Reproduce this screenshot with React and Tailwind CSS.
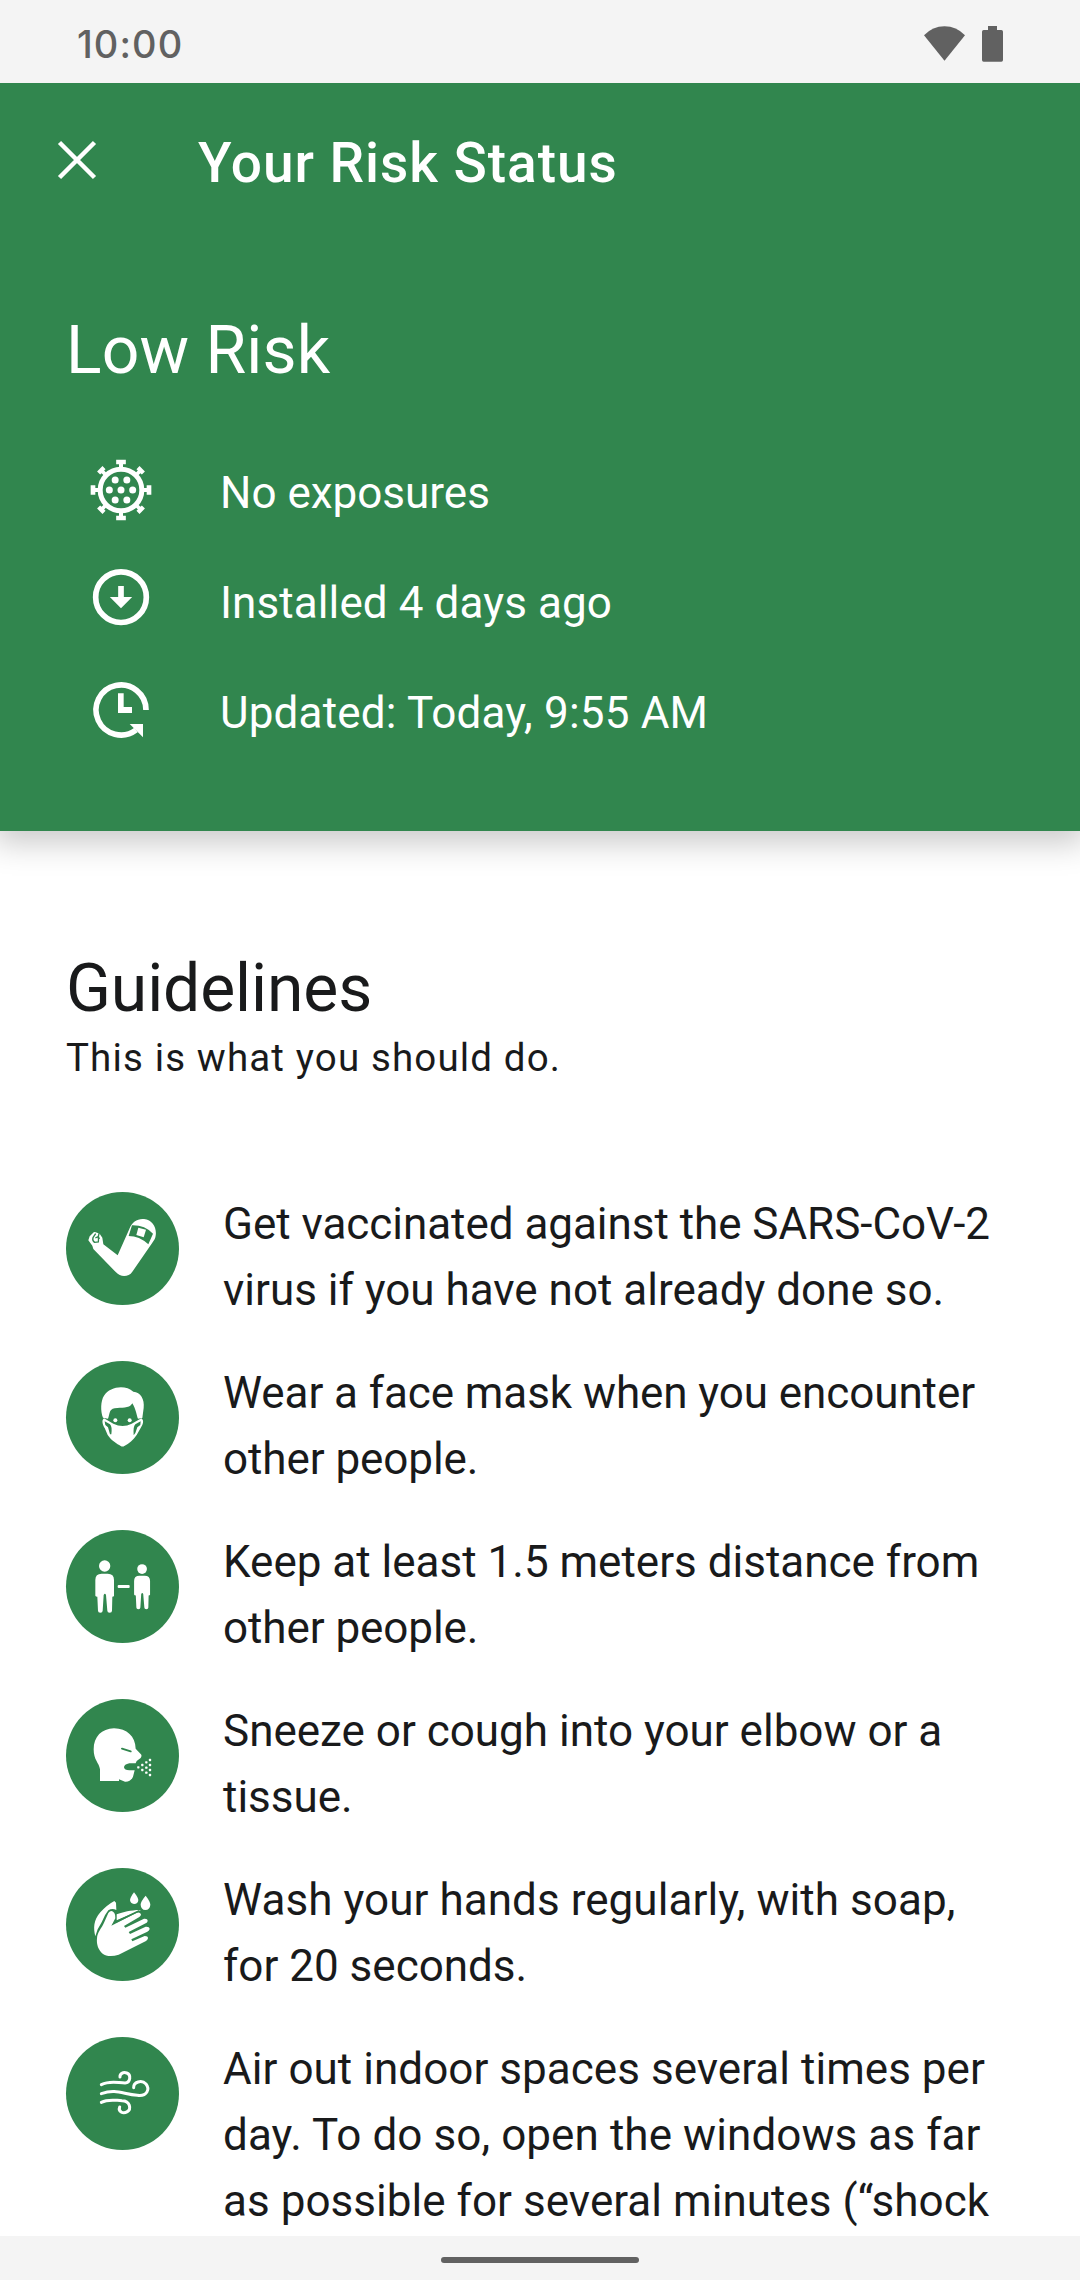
const G = "#31864E";

function VirusIcon() {
  return (
    <svg className="h-[66px] w-[66px] overflow-visible" viewBox="84 60 198 198" fill="#fff">
      <circle cx="183" cy="150" r="62.5" fill="none" stroke="#fff" strokeWidth="15" />
      {[0, 90, 180, 270].map((a) => (
        <g key={a} transform={`rotate(${a} 183 150)`}>
          <path d="M168.500 59h29v14h-8.500v10h-12v-10h-8.500z" />
        </g>
      ))}
      {[45, 135, 225, 315].map((a) => (
        <g key={a} transform={`rotate(${a} 183 150)`}>
          <path d="M171.500 60h23v13h-6v10h-11v-10h-6z" />
        </g>
      ))}
      {[[165.500, 120], [200.500, 120], [148, 150], [183, 150], [218, 150], [165.500, 180], [200.500, 180]].map(([x, y]) => (
        <circle key={`${x}-${y}`} cx={x} cy={y} r="10.500" />
      ))}
    </svg>
  );
}

function InstalledIcon() {
  return (
    <svg className="h-[66px] w-[66px] overflow-visible" viewBox="84 390 198 198" fill="#fff">
      <circle cx="183" cy="471.500" r="76" fill="none" stroke="#fff" strokeWidth="17" />
      <path d="M174.500 438h17v33h25l-33.500 33.500l-33.500-33.500h25z" />
    </svg>
  );
}

function UpdatedIcon() {
  return (
    <svg className="h-[66px] w-[66px] overflow-visible" viewBox="84 720 198 198" fill="#fff">
      <path d="M258 810A75 75 0 1 0 228 870" fill="none" stroke="#fff" strokeWidth="17" />
      <path d="M209 852h40v40z" />
      <path d="M174 760h17v41h25v18h-42z" />
    </svg>
  );
}

function VaccineIcon() {
  return (
    <svg className="h-full w-full" viewBox="48 36 339 339" fill="#fff">
      <path d="M115 181L119 169L132 156L137 157L149 161L157 173L160 193L203 226L238 147C246 125 263 115 282 117C308 120 321 144 317 167C316 175 312 181 307 188L247 275C236 292 211 292 198 277L130 207L127 197Z" />
      <path d="M246 136Q284 135 309 161L295 193Q268 168 236 168Z" fill={G} />
      <path d="M265 143L288 149L281 172L259 165Z" />
      <path d="M137 161L129 173Q126 182 134 187L145 186Q147 177 144 170L136 174M148 158L145 169L148 177" fill="none" stroke={G} strokeWidth="4" />
    </svg>
  );
}

function MaskIcon() {
  return (
    <svg className="h-full w-full" viewBox="48 33 339 339" fill="#fff">
      <path d="M159 203C151 184 152 152 162 137C180 109 226 103 250 125C272 127 284 147 281 174L277 204L264 206C260 198 258 177 247 160C236 178 215 171 194 175C176 178 180 193 174 206Z" />
      <path d="M162 205C153 211 159 227 164 234L173 255C185 273 201 281 212 288Q218 291 223 288C237 280 250 271 260 255L272 234C278 226 284 211 274 205L245 221Q218 235 190 221Z" />
      <path d="M164 214L180 223Q187 229 184 253L180 253L174 232L166 225Z M272 214L256 223Q249 229 251 256L256 249L262 232L271 225Z" fill={G} />
      <circle cx="196" cy="211" r="6" />
      <circle cx="239" cy="211" r="6" />
    </svg>
  );
}

function Person() {
  return (
    <>
      <circle cx="164" cy="138" r="17" />
      <path d="M155 161h18q19 0 19 19v48q-1 2-5 2l-1 42q0 6-7 6t-7-6l-4-47q-3-7-7 0l-3 47q0 6-7 6t-7-6l-2-42q-5 0-6-3v-47q0-19 19-19z" />
    </>
  );
}

function DistanceIcon() {
  return (
    <svg className="h-full w-full" viewBox="48 30 339 339" fill="#fff">
      <Person />
      <g transform="translate(136 28.500) scale(.855 .860)">
        <Person />
      </g>
      <rect x="203" y="195" width="36" height="9" rx="3" />
    </svg>
  );
}

function CoughIcon() {
  return (
    <svg className="h-full w-full" viewBox="48 27 339 339" fill="#fff">
      <path d="M150 273V238C147 218 131 211 131 178C131 140 155 116 192 115C231 116 256 139 257 176L272 192Q277 197 272 204L260 213L257 220H238Q222 223 222 232Q223 241 238 241H254L249 260Q242 276 225 275L207 268V273Z" />
      <path d="M216 176L242 184" stroke={G} strokeWidth="6" strokeLinecap="round" />
      {[[265, 232], [277, 225], [277, 240], [289, 217], [289, 233], [289, 248], [300, 210], [300, 225], [300, 240], [300, 255]].map(([x, y]) => (
        <rect key={`${x}-${y}`} x={x - 3.5} y={y - 3.5} width="7" height="7" rx="2" />
      ))}
    </svg>
  );
}

function HandsIcon() {
  return (
    <svg className="h-full w-full" viewBox="48 24 339 339" fill="#fff">
      <path d="M136 229C130 205 130 181 151 157Q172 134 193 123L198 128L199 150Q187 143 175 151Q164 164 155 187L143 208Z" />
      <path d="M200 163C220 156 247 149 273 150L200 181Z" />
      <path d="M141 235C142 215 155 206 163 186L175 159Q184 147 193 159Q197 165 196 175L184 197L260 158Q270 155 273 163Q273 168 268 171L222 198L226 203L282 176Q293 175 293 183Q292 188 287 190L236 216L240 222L287 200Q298 199 299 207Q298 212 292 215L244 238L247 244L284 228Q294 228 294 235Q293 240 288 243L206 284C187 290 168 289 158 281C145 271 139 253 141 235Z" />
      <path d="M196 187L268 152" fill="none" stroke={G} strokeWidth="5" />
      <path d="M252 97Q264 112 265 120Q264 132 252 132Q241 131 240 120Q241 112 252 97Z" />
      <path d="M287 107Q301 125 301 134Q300 149 286 150Q273 149 272 134Q272 124 287 107Z" />
    </svg>
  );
}

function WindIcon() {
  return (
    <svg className="h-full w-full" viewBox="48 36 339 339" fill="none" stroke="#fff" strokeWidth="9" strokeLinecap="round">
      <path d="M154 179C180 166 203 174 225 174C242 173 244 149 230 144C219 140 209 147 210 156" />
      <path d="M154 206C200 190 221 209 262 211C292 215 300 192 288 177C275 163 250 171 251 188" />
      <path d="M154 232C175 221 193 226 216 227C241 227 244 253 232 260C218 268 204 259 209 246" />
    </svg>
  );
}

const status = [
  [VirusIcon, "No exposures", "tracking-normal"],
  [InstalledIcon, "Installed 4 days ago", "tracking-[0.1px]"],
  [UpdatedIcon, "Updated: Today, 9:55 AM", "tracking-[0.19px]"],
];

const guidelines = [
  [VaccineIcon, [
    ["Get vaccinated against the SARS-CoV-2", "tracking-[-0.04px]"],
    ["virus if you have not already done so.", "tracking-normal"],
  ]],
  [MaskIcon, [
    ["Wear a face mask when you encounter", "tracking-[-0.08px]"],
    ["other people.", "tracking-[-0.08px]"],
  ]],
  [DistanceIcon, [
    ["Keep at least 1.5 meters distance from", "tracking-normal"],
    ["other people.", "tracking-[-0.08px]"],
  ]],
  [CoughIcon, [
    ["Sneeze or cough into your elbow or a", "tracking-normal"],
    ["tissue.", "tracking-normal"],
  ]],
  [HandsIcon, [
    ["Wash your hands regularly, with soap,", "tracking-[0.06px]"],
    ["for 20 seconds.", "tracking-normal"],
  ]],
  [WindIcon, [
    ["Air out indoor spaces several times per", "tracking-[0.04px]"],
    ["day. To do so, open the windows as far", "tracking-[0.08px]"],
    ["as possible for several minutes (“shock", "tracking-[0.04px]"],
  ]],
];

export default function App() {
  return (
    <div className="flex h-[2280px] w-[1080px] flex-col overflow-hidden bg-white font-['Roboto',sans-serif] text-[#191a1b]">
      <div className="relative z-20 flex h-[83px] shrink-0 items-center justify-between bg-[#f4f4f4] pt-[4px] pr-[76px] pl-[77px] text-[#616161]">
        <span className="mt-px font-['Inter',sans-serif] text-[38px] leading-none font-medium tracking-[1.1px]">10:00</span>
        <svg className="h-[36px] w-[80px]" viewBox="72 75 240 108" fill="#616161">
          <path d="M72 103Q98 76 133.500 76Q169 76 195 103L133.500 179Z" />
          <path d="M264 75h27v12h13q5 0 5 5v85q0 5-5 5h-53q-5 0-5-5v-85q0-5 5-5h13z" />
        </svg>
      </div>

      <header className="z-10 flex h-[748px] shrink-0 flex-col bg-[#31864E] text-white shadow-[0_6px_30px_6px_rgba(0,0,0,0.21)]">
        <div className="flex h-[154px] items-center pl-[57px]">
          <svg className="h-[40px] w-[40px]" viewBox="0 0 40 40" stroke="#fff" strokeWidth="4.500">
            <path d="M2.500 2.500L37.500 37.500M37.500 2.500L2.500 37.500" />
          </svg>
          <h1 className="mt-[6px] ml-[101px] text-[55px] leading-[64px] font-medium tracking-[0.95px]">Your Risk Status</h1>
        </div>
        <h2 className="mt-[75px] ml-[66px] text-[66px] leading-[78px] tracking-[0.1px]">Low Risk</h2>
        <ul className="mt-[48px] ml-[88px]">
          {status.map(([Icon, label, tracking]) => (
            <li key={label} className="flex h-[110px] items-center gap-[66px] text-[44px] leading-[66px]">
              <Icon />
              <span className={`whitespace-nowrap ${tracking}`}>{label}</span>
            </li>
          ))}
        </ul>
      </header>

      <main className="flex h-[1405px] shrink-0 flex-col overflow-hidden px-[66px] pt-[119px]">
        <h2 className="text-[66px] leading-[78px] tracking-[-0.1px]">Guidelines</h2>
        <p className="mt-[4px] text-[38.5px] leading-[52px] tracking-[1.14px]">This is what you should do.</p>
        <ul className="mt-[107px] flex flex-col gap-[37px]">
          {guidelines.map(([Icon, lines]) => (
            <li key={lines[0][0]} className="flex items-start gap-[44px]">
              <span className="mt-px h-[113px] w-[113px] shrink-0 rounded-full bg-[#31864E]">
                <Icon />
              </span>
              <p className="text-[44px] leading-[66px] whitespace-nowrap">
                {lines.map(([line, tracking]) => (
                  <span key={line} className={`block ${tracking}`}>{line}</span>
                ))}
              </p>
            </li>
          ))}
        </ul>
      </main>

      <footer className="flex h-[44px] shrink-0 justify-center bg-[#f4f4f4] pt-[21px]">
        <span className="h-[6px] w-[198px] rounded-full bg-[#616161]" />
      </footer>
    </div>
  );
}
